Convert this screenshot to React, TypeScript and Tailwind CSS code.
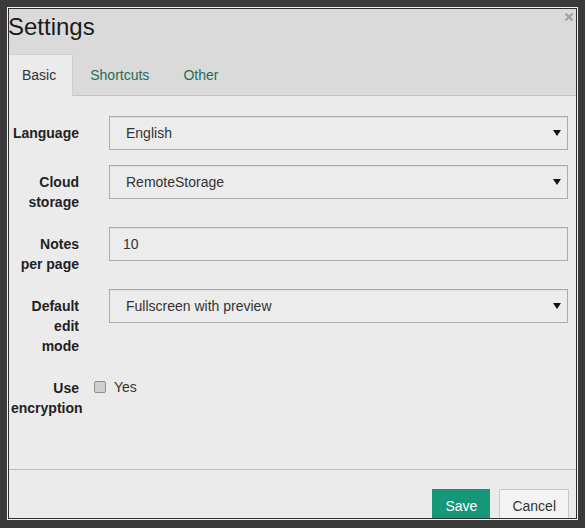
const font = { fontFamily: '"Liberation Sans", Arial, sans-serif' };

function Caret() {
  return (
    <svg width="8" height="6" viewBox="0 0 8 6" className="shrink-0">
      <path d="M0 0 H8 L4 6 Z" fill="#111" />
    </svg>
  );
}

function SelectBox({ value }: { value: string }) {
  return (
    <div className="flex h-[34px] items-center justify-between border border-[#ababab] bg-[#ececec] pl-[16px] pr-[6px] text-[14px] text-[#333] shadow-[inset_0_1px_1px_rgba(0,0,0,0.06)]">
      <span>{value}</span>
      <Caret />
    </div>
  );
}

function TextBox({ value }: { value: string }) {
  return (
    <div className="flex h-[34px] items-center border border-[#ababab] bg-[#ececec] pl-[13px] text-[14px] text-[#333] shadow-[inset_0_1px_1px_rgba(0,0,0,0.06)]">
      {value}
    </div>
  );
}

function Row({ label, children }: { label: string[]; children: React.ReactNode }) {
  return (
    <div className="mb-[15px] flex items-start">
      <div className="w-[68px] shrink-0 pt-[7px] text-right text-[14px] font-bold leading-[20px] text-[#222]">
        {label.map((l) => (
          <div key={l}>{l}</div>
        ))}
      </div>
      <div className="ml-[30px] flex-1">{children}</div>
    </div>
  );
}

export default function App() {
  const tabs = ['Basic', 'Shortcuts', 'Other'];

  return (
    <div className="h-[528px] w-[585px] bg-[#3a3a3a] px-[7px] pt-[7px] pb-[8px]" style={font}>
      <div className="h-full border border-[#f2f2f2]">
        <div className="relative flex h-full flex-col overflow-hidden border border-[#2e2e2e] bg-[#ebebeb]">
          {/* header */}
          <div className="border-b border-[#c2c2c2] bg-[#dadada]">
            <h1 className="-ml-[1px] h-[45px] pt-[3px] text-[24px] leading-[30px] text-[#1a1a1a]">Settings</h1>
            <svg
              width="10"
              height="10"
              viewBox="0 0 10 10"
              className="absolute top-[3px] right-[2px]"
              aria-label="close"
            >
              <path d="M1.5 1.5 L8.5 8.5 M8.5 1.5 L1.5 8.5" stroke="#a3a3a3" strokeWidth="2.4" />
            </svg>
            <div className="-mb-px flex h-[42px] items-end">
              {tabs.map((t, i) =>
                i === 0 ? (
                  <div
                    key={t}
                    className="flex h-[42px] items-center border border-b-0 border-[#cfcfcf] border-l-transparent bg-[#ebebeb] pl-[12px] pr-[16px] text-[14px] text-[#333]"
                  >
                    {t}
                  </div>
                ) : (
                  <div
                    key={t}
                    className="flex h-[41px] items-center px-[17px] text-[14px] text-[#1f6d58]"
                  >
                    {t}
                  </div>
                ),
              )}
            </div>
          </div>

          {/* body */}
          <div className="flex-1 pt-[20px] pr-[8px] pl-[2px]">
            <Row label={['Language']}>
              <SelectBox value="English" />
            </Row>
            <Row label={['Cloud', 'storage']}>
              <SelectBox value="RemoteStorage" />
            </Row>
            <Row label={['Notes', 'per page']}>
              <TextBox value="10" />
            </Row>
            <Row label={['Default', 'edit', 'mode']}>
              <SelectBox value="Fullscreen with preview" />
            </Row>
            <div className="flex items-start">
              <div className="w-[68px] shrink-0 pt-[7px] text-right text-[14px] font-bold leading-[20px] text-[#222]">
                <div>Use</div>
                <div>encryption</div>
              </div>
              <div className="ml-[15px] flex items-center pt-[10px]">
                <div className="h-[12px] w-[12px] rounded-[2px] border border-[#8e8e8e] bg-[#cfcfcf]" />
                <span className="ml-[8px] text-[14px] leading-[12px] text-[#333]">Yes</span>
              </div>
            </div>
          </div>

          {/* footer */}
          <div className="flex h-[49px] shrink-0 items-start justify-end gap-[9px] border-t border-[#bdbdbd] pt-[19px] pr-[7px]">
            <button className="h-[34px] bg-[#17977a] px-[13px] text-[14px] text-white">Save</button>
            <button className="h-[34px] border border-[#c8c8c8] bg-[#f3f3f3] px-[12px] text-[14px] text-[#333]">
              Cancel
            </button>
          </div>
        </div>
      </div>
    </div>
  );
}
